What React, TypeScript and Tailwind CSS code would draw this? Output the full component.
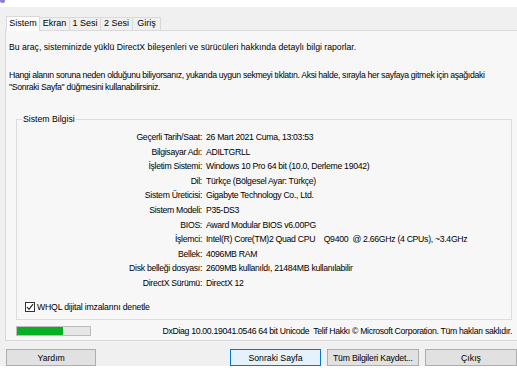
import React from "react";

const ROWS: [string, string][] = [
  ["Geçerli Tarih/Saat:", "26 Mart 2021 Cuma, 13:03:53"],
  ["Bilgisayar Adı:", "ADILTGRLL"],
  ["İşletim Sistemi:", "Windows 10 Pro 64 bit (10.0, Derleme 19042)"],
  ["Dil:", "Türkçe (Bölgesel Ayar: Türkçe)"],
  ["Sistem Üreticisi:", "Gigabyte Technology Co., Ltd."],
  ["Sistem Modeli:", "P35-DS3"],
  ["BIOS:", "Award Modular BIOS v6.00PG"],
  ["İşlemci:", "Intel(R) Core(TM)2 Quad CPU    Q9400  @ 2.66GHz (4 CPUs), ~3.4GHz"],
  ["Bellek:", "4096MB RAM"],
  ["Disk belleği dosyası:", "2609MB kullanıldı, 21484MB kullanılabilir"],
  ["DirectX Sürümü:", "DirectX 12"],
];

const TABS = [
  { name: "Sistem", w: "w-[34px]" },
  { name: "Ekran", w: "w-[31px]" },
  { name: "1 Sesi", w: "w-[32px]" },
  { name: "2 Sesi", w: "w-[33px]" },
  { name: "Giriş", w: "w-[29px]" },
];

export default function App() {
  return (
    <div className="w-[517px] h-[372px] overflow-hidden bg-white text-[8.7px] text-black font-['Liberation_Sans',sans-serif]">
      {/* üst beyaz şerit (pencere başlığının kesik kalan kısmı) */}
      <div className="h-[7px] bg-white">
        <div className="w-[5px] h-[3px] rounded-b-full bg-[#8f7bd0]" />
      </div>

      <div className="h-[359px] bg-[#f0f0f0] flex flex-col">
        {/* sekmeler */}
        <div className="flex items-end pl-[6px] pt-[8px] h-[23px] text-[9px]">
          {TABS.map((t, i) => (
            <div
              key={t.name}
              className={`${t.w} flex items-center justify-center border border-b-0 border-[#d9d9d9] ${
                i === 0 ? "h-[15px] bg-white -mb-px relative z-10" : "h-[13px] bg-[#f0f0f0] -ml-px"
              }`}
            >
              {t.name}
            </div>
          ))}
        </div>

        {/* panel */}
        <div className="ml-[5px] h-[312px] border border-r-0 border-[#d9d9d9] bg-[#f7f7f7] flex flex-col">
          <div className="pl-[3px] pt-[10px] leading-[12px]">
            Bu araç, sisteminizde yüklü DirectX bileşenleri ve sürücüleri hakkında detaylı bilgi raporlar.
          </div>
          <div className="pl-[3px] pt-[16px] leading-[12px] whitespace-nowrap tracking-[-0.33px]">
            Hangi alanın soruna neden olduğunu biliyorsanız, yukarıda uygun sekmeyi tıklatın. Aksi halde, sırayla her sayfaya gitmek için aşağıdaki
            <br />
            "Sonraki Sayfa" düğmesini kullanabilirsiniz.
          </div>

          {/* Sistem Bilgisi grubu */}
          <div className="relative ml-[10px] mt-[26px] w-[496px] h-[201px] border border-[#dcdcdc]">
            <div className="absolute left-[5px] -top-[7px] px-[1px] bg-[#f7f7f7] leading-[12px]">Sistem Bilgisi</div>
            <div className="pt-[10px] grid grid-cols-[185px_1fr] gap-x-[4px] leading-[14.6px] tracking-[-0.3px]">
              {ROWS.map(([k, v]) => (
                <React.Fragment key={k}>
                  <div className="text-right">{k}</div>
                  <div className="whitespace-pre">{v}</div>
                </React.Fragment>
              ))}
            </div>
            <label className="absolute left-[8px] top-[181px] flex items-center gap-[2px] leading-[12px] tracking-[-0.2px]">
              <span className="w-[10px] h-[10px] border border-[#333] bg-white flex items-center justify-center">
                <svg width="8" height="8" viewBox="0 0 8 8">
                  <path d="M1 4.2 L3 6.3 L7 1.2" fill="none" stroke="#222" strokeWidth="1.1" />
                </svg>
              </span>
              WHQL dijital imzalarını denetle
            </label>
          </div>

          {/* ilerleme çubuğu + sürüm */}
          <div className="flex items-center mt-[5px] ml-[10px] pr-[5px]">
            <div className="w-[75px] h-[10px] border border-[#bcbcbc] bg-[#e6e6e6]">
              <div className="w-[46px] h-full bg-[#06b025]" />
            </div>
            <div className="ml-auto leading-[12px] tracking-[-0.32px] whitespace-nowrap">
              DxDiag 10.00.19041.0546 64 bit Unicode&nbsp; Telif Hakkı © Microsoft Corporation. Tüm hakları saklıdır.
            </div>
          </div>
        </div>

        {/* butonlar */}
        <div className="flex items-start pt-[8px] pl-[6px]">
          <button className="w-[92px] h-[17px] border border-[#adadad] bg-[#e1e1e1] leading-[14px]">Yardım</button>
          <button className="ml-[134px] w-[92px] h-[17px] border border-[#0078d7] bg-[#e5f1fb] leading-[14px]">Sonraki Sayfa</button>
          <button className="ml-[6px] w-[94px] h-[17px] border border-[#adadad] bg-[#e1e1e1] leading-[14px] tracking-[-0.2px]">Tüm Bilgileri Kaydet...</button>
          <button className="ml-[6px] w-[92px] h-[17px] border border-[#adadad] bg-[#e1e1e1] leading-[14px] shrink-0">Çıkış</button>
        </div>
      </div>
    </div>
  );
}
